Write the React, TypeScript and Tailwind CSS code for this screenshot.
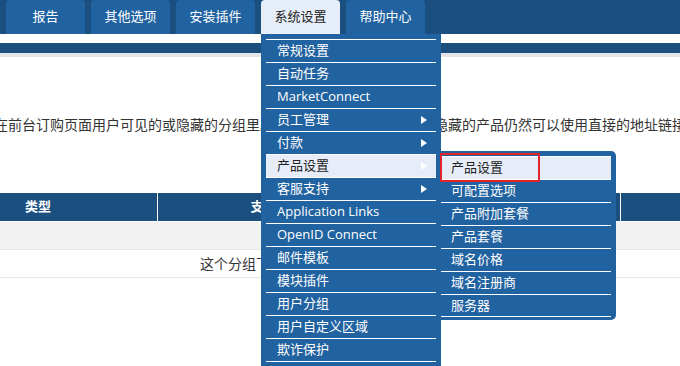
import React from 'react'

const tabs = ['报告', '其他选项', '安装插件', '系统设置', '帮助中心']

const menuItems = [
  { label: '常规设置' },
  { label: '自动任务' },
  { label: 'MarketConnect' },
  { label: '员工管理', sub: true },
  { label: '付款', sub: true },
  { label: '产品设置', sub: true, active: true },
  { label: '客服支持', sub: true },
  { label: 'Application Links' },
  { label: 'OpenID Connect' },
  { label: '邮件模板' },
  { label: '模块插件' },
  { label: '用户分组' },
  { label: '用户自定义区域' },
  { label: '欺诈保护' },
  { label: '其他设置' },
]

const subItems = ['产品设置', '可配置选项', '产品附加套餐', '产品套餐', '域名价格', '域名注册商', '服务器']

export default function App() {
  return (
    <div
      className="relative h-[366px] w-[680px] overflow-hidden bg-white text-[#333]"
      style={{ fontFamily: '"Open Sans", "Noto Sans CJK SC", sans-serif' }}
    >
      {/* top navigation */}
      <div className="flex h-[34px] gap-[6px] bg-[#1b4f80] pl-[6px]">
        {tabs.map((t) => (
          <div
            key={t}
            className={`flex w-[79px] items-center justify-center rounded-t-[4px] text-[13px] ${
              t === '系统设置' ? 'bg-[#e6eef9] text-[#222]' : 'bg-[#2162a0] text-white'
            }`}
          >
            {t}
          </div>
        ))}
      </div>
      <div className="h-[9px] bg-white" />
      <div className="h-[10px] bg-[#1b4f80]" />
      <div className="h-[4px] bg-[#e4e5e7]" />

      {/* content */}
      <p className="ml-[-6px] mt-[58px] whitespace-nowrap text-[14px] leading-[20px] text-[#333]">
        在前台订购页面用户可见的或隐藏的分组里。隐藏分组中的产品不显示，
        <span className="ml-[-8px]">隐藏的产品仍然可以使用直接的地址链接订购。</span>
      </p>

      <div className="ml-[-81px] mt-[58px] w-[800px]">
        <div className="flex h-[28px] items-center bg-[#1b4f80] text-[13px] font-bold text-white">
          <div className="w-[238px] text-center">类型</div>
          <div className="flex h-full w-[238px] items-center justify-center border-l border-white">支付类型</div>
          <div className="h-full w-[225px]" />
          <div className="h-full flex-1 border-l border-white" />
        </div>
        <div className="mt-px h-[28px] border-b border-[#e8e8e8] bg-[#f2f2f2]" />
        <div className="flex h-[28px] items-center border-b border-[#e8e8e8] pl-[281px] text-[14px]">
          这个分组下还没有产品
        </div>
      </div>

      {/* dropdown menu */}
      <div className="absolute left-[261px] top-[34px] w-[180px] bg-[#2162a0] px-[5px] pt-[5px]">
        {menuItems.map((m) => (
          <div
            key={m.label}
            className={`flex h-[23px] items-center justify-between border-t border-white pl-[11px] pr-[9px] text-[13px] ${
              m.active ? 'bg-[#e6edf9] text-[#222]' : 'text-white'
            }`}
          >
            <span>{m.label}</span>
            {m.sub && (
              <span className="h-0 w-0 border-y-[4px] border-l-[6px] border-y-transparent border-l-white" />
            )}
          </div>
        ))}
      </div>

      {/* sub menu */}
      <div className="absolute left-[440px] top-[151px] w-[176px] rounded-r-[5px] bg-[#2162a0] pb-[3px] pl-[1px] pr-[5px] pt-[5px]">
        {subItems.map((s, i) => (
          <div
            key={s}
            className={`flex h-[23px] items-center border-t border-white pl-[10px] text-[13px] ${
              i === 0 ? 'bg-[#e6edf9] text-[#222]' : 'text-white'
            } ${i === subItems.length - 1 ? 'border-b' : ''}`}
          >
            {s}
          </div>
        ))}
      </div>

      {/* highlight box */}
      <div className="absolute left-[440px] top-[153px] h-[29px] w-[100px] border-2 border-[#e0252d]" />
    </div>
  )
}
